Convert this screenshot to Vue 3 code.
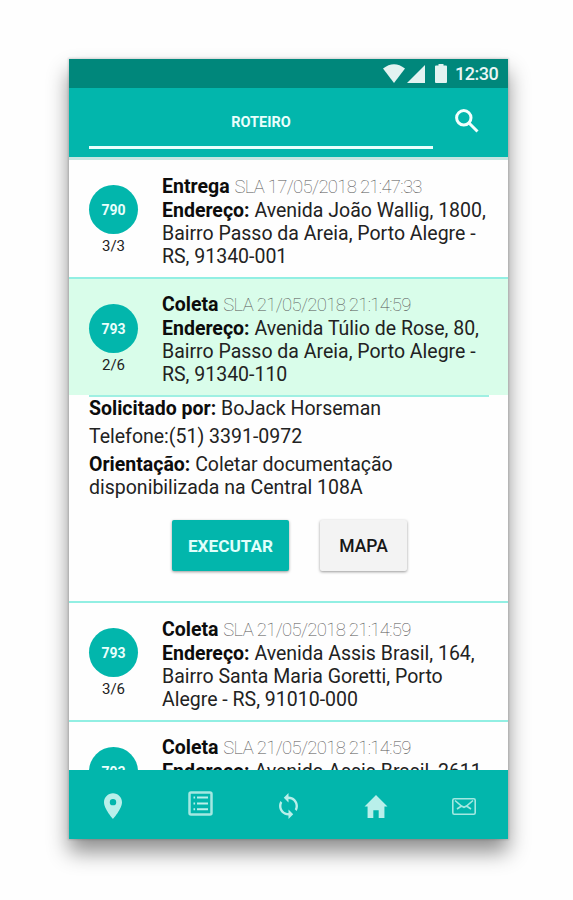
<script setup>
import { ref } from 'vue'

const selected = ref(1)
const stops = ref([
  {
    code: '790',
    order: '3/3',
    type: 'Entrega',
    sla: '17/05/2018 21:47:33',
    address: ['Avenida João Wallig, 1800,', 'Bairro Passo da Areia, Porto Alegre -', 'RS, 91340-001'],
  },
  {
    code: '793',
    order: '2/6',
    type: 'Coleta',
    sla: '21/05/2018 21:14:59',
    address: ['Avenida Túlio de Rose, 80,', 'Bairro Passo da Areia, Porto Alegre -', 'RS, 91340-110'],
    requester: 'BoJack Horseman',
    phone: '(51) 3391-0972',
    notes: ['Coletar documentação', 'disponibilizada na Central 108A'],
  },
  {
    code: '793',
    order: '3/6',
    type: 'Coleta',
    sla: '21/05/2018 21:14:59',
    address: ['Avenida Assis Brasil, 164,', 'Bairro Santa Maria Goretti, Porto', 'Alegre - RS, 91010-000'],
  },
  {
    code: '793',
    type: 'Coleta',
    sla: '21/05/2018 21:14:59',
    address: ['Avenida Assis Brasil, 2611'],
  },
])

function select(i) {
  if (stops.value[i].requester) {
    selected.value = selected.value === i ? -1 : i
  }
}
</script>

<template>
  <div class="page">
    <div class="phone">
      <div class="status">
        <svg class="wifi" viewBox="0 0 22 19"><path d="M0 4.600Q11-4 22 4.600L11 19Z" /></svg>
        <svg class="signal" viewBox="0 0 18 18"><path d="M18 0V18H0Z" /></svg>
        <svg class="battery" viewBox="0 0 12 19"><path d="M3.500 0h5v1.500H11q1 0 1 1v15.500q0 1-1 1H1q-1 0-1-1V2.500q0-1 1-1h2.500Z" /></svg>
        <span class="clock">12:30</span>
      </div>
      <header class="header">
        <div class="tab">ROTEIRO</div>
        <svg class="search" viewBox="0 0 24 24">
          <circle cx="8.800" cy="8.800" r="7.200" />
          <path d="M14 14L22.500 22.500" />
        </svg>
      </header>
      <main class="list">
        <div v-for="(stop, i) in stops" :key="i" class="item">
          <div class="row" :class="{ active: selected === i }" @click="select(i)">
            <div class="side">
              <div class="badge">{{ stop.code }}</div>
              <div v-if="stop.order" class="order">{{ stop.order }}</div>
            </div>
            <div class="info">
              <p><b>{{ stop.type }}</b> <span class="sla">SLA {{ stop.sla }}</span></p>
              <p><b>Endereço:</b> {{ stop.address[0] }}</p>
              <p v-for="line in stop.address.slice(1)" :key="line">{{ line }}</p>
            </div>
          </div>
          <div v-if="selected === i" class="details">
            <p><b>Solicitado por:</b> {{ stop.requester }}</p>
            <p>Telefone:{{ stop.phone }}</p>
            <p><b>Orientação:</b> {{ stop.notes[0] }}<br>{{ stop.notes[1] }}</p>
            <div class="actions">
              <button class="btn primary">EXECUTAR</button>
              <button class="btn">MAPA</button>
            </div>
          </div>
        </div>
      </main>
      <nav class="nav">
        <a><svg class="pin" viewBox="5 2 14 20"><path d="M12 2C8.130 2 5 5.130 5 9c0 5.250 7 13 7 13s7-7.750 7-13c0-3.870-3.130-7-7-7zm0 9.500a2.500 2.500 0 1 1 0-5 2.500 2.500 0 0 1 0 5z" /></svg></a>
        <a>
          <svg class="lines" viewBox="0 0 25 25">
            <rect class="frame" x="1.500" y="1.500" width="22" height="22" rx="1.500" />
            <path d="M5.500 5.500h1.600v2H5.500zM5.500 11.500h1.600v2H5.500zM5.500 17.200h1.600v2H5.500zM9 5.500H20v2H9zM9 11.500H20v2H9zM9 17.200H20v2H9z" />
          </svg>
        </a>
        <a><svg class="sync" viewBox="4 1 16 22"><path d="M12 4V1L8 5l4 4V6c3.310 0 6 2.690 6 6 0 1.010-.25 1.970-.7 2.800l1.460 1.460C19.540 15.030 20 13.570 20 12c0-4.420-3.580-8-8-8zm0 14c-3.310 0-6-2.690-6-6 0-1.010.25-1.970.7-2.800L5.240 7.740C4.460 8.970 4 10.430 4 12c0 4.420 3.580 8 8 8v3l4-4-4-4v3z" /></svg></a>
        <a><svg class="home" viewBox="0 0 24 24"><path d="M12 0L24 12h-3.200v12H14.800v-8H9.200v8H3.200V12H0Z" /></svg></a>
        <a>
          <svg class="mail" viewBox="0 0 24 17">
            <rect x=".8" y=".8" width="22.400" height="15.400" rx="1.500" />
            <path d="M3 2.500L9.500 8L12 9.300L14.500 8L21 2.500M5 11L9.500 8M19 11L14.500 8" />
          </svg>
        </a>
      </nav>
    </div>
  </div>
</template>

<style>
body {
  margin: 0;
  background: #fefefe;
}
</style>

<style scoped>
.page {
  box-sizing: border-box;
  min-height: 100vh;
  padding: 59px 0 0 69px;
}
.phone {
  display: flex;
  flex-direction: column;
  width: 439px;
  height: 780px;
  background: #fefefe;
  color: #222;
  font-family: Roboto, sans-serif;
  box-shadow: 0 0 2px 1px rgba(0, 0, 0, .14), 0 13px 20px 0 rgba(0, 0, 0, .44);
}
p {
  margin: 0;
}
b {
  font-weight: 700;
  color: #0c0c0c;
}
.status {
  display: flex;
  align-items: center;
  justify-content: flex-end;
  height: 29px;
  padding-right: 10px;
  background: #00877b;
  svg {
    fill: #e3f3f1;
  }
  .wifi {
    width: 22px;
    height: 19px;
    margin-right: 2px;
  }
  .signal {
    width: 18px;
    height: 18px;
    margin-right: 10px;
  }
  .battery {
    width: 12px;
    height: 19px;
    margin-right: 8px;
  }
}
.clock {
  width: 43px;
  color: #e9f6f5;
  font-size: 18px;
  font-weight: 500;
  letter-spacing: -.5px;
}
.header {
  display: flex;
  height: 69px;
  padding-left: 20px;
  background: #02b6ac;
  border-bottom: 3px solid #c4e5e1;
}
.tab {
  box-sizing: border-box;
  width: 344px;
  height: 61px;
  padding-top: 8px;
  border-bottom: 3px solid #e9fffc;
  color: #e9fffc;
  font-size: 14.500px;
  font-weight: 700;
  line-height: 54px;
  text-align: center;
}
.search {
  width: 24px;
  height: 24px;
  margin: 21px 0 0 22px;
  fill: none;
  stroke: #f2fffd;
  stroke-width: 3;
}
.list {
  flex: 1;
  min-height: 0;
  overflow: hidden;
}
.item {
  border-bottom: 2px solid #92efe3;
}
.row {
  display: flex;
  box-sizing: border-box;
  height: 116.500px;
  padding-left: 20px;
  &.active {
    background: #d9fdea;
  }
}
.side {
  width: 49px;
  margin-right: 24px;
  padding-top: 25px;
  text-align: center;
}
.badge {
  height: 49px;
  border-radius: 50%;
  background: #02b6ac;
  color: #e9fffc;
  font-size: 14px;
  font-weight: 700;
  line-height: 50px;
}
.order {
  font-size: 15px;
  line-height: 24px;
}
.info {
  padding-top: 14.500px;
  font-size: 19.500px;
  line-height: 23px;
  white-space: nowrap;
}
.sla {
  color: #555;
  font-weight: 100;
  font-size: 18.500px;
  letter-spacing: -.68px;
}
.details {
  box-sizing: border-box;
  height: 206px;
  margin: 0 19px 0 20px;
  border-top: 2px solid #9ff0e3;
  font-size: 19.500px;
  line-height: 23px;
  p {
    margin-bottom: 5px;
  }
}
.actions {
  display: flex;
  gap: 31px;
  padding: 16px 0 0 83px;
}
.btn {
  width: 87px;
  height: 51px;
  padding: 0;
  border: 0;
  border-radius: 2px;
  background: #f3f3f3;
  box-shadow: 0 1px 3px rgba(0, 0, 0, .4);
  color: #171717;
  font-family: inherit;
  font-size: 17.500px;
  font-weight: 500;
  &.primary {
    width: 117px;
    background: #02b6ac;
    color: #e0fffb;
    font-size: 17.200px;
    font-weight: 700;
  }
}
.nav {
  display: flex;
  height: 69px;
  background: #02b6ac;
  a {
    display: flex;
    align-items: center;
    justify-content: center;
    flex: 1;
  }
  svg {
    fill: #b9efea;
  }
  .pin {
    width: 18px;
    height: 26px;
    margin-top: 2px;
  }
  .lines {
    width: 25px;
    height: 25px;
    margin-bottom: 3px;
  }
  .frame {
    fill: none;
    stroke: #a4e8e1;
    stroke-width: 2.500;
  }
  .sync {
    width: 19px;
    height: 26px;
    margin-top: 2px;
  }
  .home {
    width: 24px;
    height: 23px;
    margin-top: 4px;
  }
  .mail {
    width: 24px;
    height: 17px;
    margin-top: 3px;
    fill: none;
    stroke: #a4e8e1;
    stroke-width: 1.600;
  }
}
</style>
